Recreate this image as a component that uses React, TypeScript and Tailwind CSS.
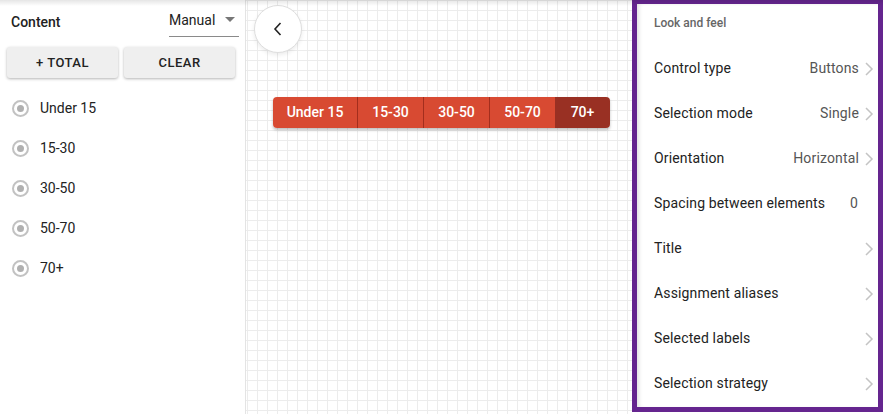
import React from "react";

const Chevron = () => (
  <svg width="10" height="16" viewBox="0 0 10 16" className="shrink-0">
    <path d="M2 2 L8 8 L2 14" fill="none" stroke="#c4c4c4" strokeWidth="1.5" />
  </svg>
);

const Radio = ({ label }: { label: string }) => (
  <div className="flex items-center h-[40px]">
    <div className="ml-[12px] w-[17px] h-[17px] rounded-full border-2 border-[#c2c2c2] flex items-center justify-center">
      <div className="w-[7px] h-[7px] rounded-full bg-[#b0b0b0]" />
    </div>
    <span className="ml-[11px] text-[14px] text-[#222]">{label}</span>
  </div>
);

const rows: [string, string, boolean][] = [
  ["Control type", "Buttons", true],
  ["Selection mode", "Single", true],
  ["Orientation", "Horizontal", true],
  ["Spacing between elements", "0", false],
  ["Title", "", true],
  ["Assignment aliases", "", true],
  ["Selected labels", "", true],
  ["Selection strategy", "", true],
];

const segs = ["Under 15", "15-30", "30-50", "50-70", "70+"];
const segW = [85, 66, 66, 65, 55];

export default function App() {
  return (
    <div
      className="relative flex w-[883px] h-[414px] bg-white overflow-hidden"
      style={{ fontFamily: "Roboto, 'Noto Sans', sans-serif" }}
    >
      {/* left panel */}
      <div className="w-[246px] shrink-0 h-full border-r border-[#e4e4e4] bg-white flex flex-col">
        <div className="flex items-start justify-between h-[40px] pl-[11px] pr-[6px]">
          <span className="mt-[12px] text-[14px] font-medium text-[#222]">Content</span>
          <div className="mt-[7px] w-[70px] h-[30px] border-b border-[#8a8a8a] flex items-start justify-between pr-[4px]">
            <span className="text-[14px] text-[#222] mt-[3px]">Manual</span>
            <svg width="10" height="6" viewBox="0 0 10 6" className="mt-[10px]">
              <path d="M0 0 L10 0 L5 5 Z" fill="#777" />
            </svg>
          </div>
        </div>
        <div className="flex gap-[6px] px-[7px] mt-[7px]">
          <button className="w-[111px] h-[31px] rounded-[3px] bg-[#efefef] shadow-[0_1px_3px_rgba(0,0,0,0.3)] text-[13px] font-medium tracking-[0.5px] text-[#222]">
            + TOTAL
          </button>
          <button className="w-[111px] h-[31px] rounded-[3px] bg-[#efefef] shadow-[0_1px_3px_rgba(0,0,0,0.3)] text-[13px] font-medium tracking-[0.5px] text-[#222]">
            CLEAR
          </button>
        </div>
        <div className="mt-[10px] flex flex-col">
          {segs.map((s) => (
            <Radio key={s} label={s} />
          ))}
        </div>
      </div>

      {/* canvas */}
      <div className="relative flex-1 h-full bg-white bg-[linear-gradient(to_right,#ececec_1px,transparent_1px),linear-gradient(to_bottom,#ececec_1px,transparent_1px)] bg-[size:10px_10px] bg-[position:1px_0px]">
        <div className="absolute left-[8px] top-[5px] w-[48px] h-[48px] rounded-full bg-white border border-[#dedede] shadow-[0_2px_4px_rgba(0,0,0,0.08)] flex items-center justify-center">
          <svg width="12" height="16" viewBox="0 0 12 16">
            <path d="M8.5 2 L3 8 L8.5 14" fill="none" stroke="#222" strokeWidth="1.6" />
          </svg>
        </div>
        <div className="absolute left-[27px] top-[97px] flex h-[31px] rounded-[4px] overflow-hidden shadow-[0_2px_3px_rgba(0,0,0,0.25)]">
          {segs.map((s, i) => (
            <div
              key={s}
              style={{ width: segW[i] }}
              className={
                "flex items-center justify-center text-[14px] font-medium text-white " +
                (i === 4 ? "bg-[#993023]" : "bg-[#d84a32]") +
                (i < 3 ? " border-r border-[#a32e1d]" : "")
              }
            >
              {s}
            </div>
          ))}
        </div>
      </div>

      {/* right panel */}
      <div className="w-[251px] shrink-0 h-[412px] border-[5px] border-t-[4px] border-[#65258f] bg-white flex flex-col shadow-[inset_4px_0_4px_-2px_rgba(0,0,0,0.12)]">
        <div className="h-[42px] pl-[17px] pt-[10px] text-[12px] font-medium text-[#666]">Look and feel</div>
        {rows.map(([l, v, c]) => (
          <div key={l} className="h-[45px] flex items-center pl-[17px] pr-[4px]">
            <span className="text-[14px] tracking-[0.15px] text-[#222] flex-1">{l}</span>
            {v && <span className={"text-[14px] tracking-[0.15px] text-[#555] " + (c ? "mr-[5px]" : "mr-[16px]")}>{v}</span>}
            {c && <Chevron />}
          </div>
        ))}
      </div>

      {/* top shadow */}
      <div className="pointer-events-none absolute left-0 top-0 w-full h-[6px] bg-[linear-gradient(to_bottom,rgba(0,0,0,0.1),transparent)]" />
    </div>
  );
}
